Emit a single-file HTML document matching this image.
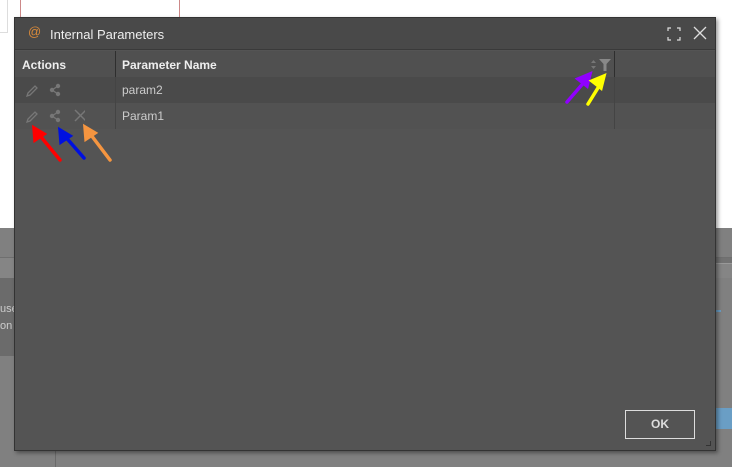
<!DOCTYPE html>
<html><head><meta charset="utf-8"><style>
*{margin:0;padding:0;box-sizing:border-box}
body{width:732px;height:467px;position:relative;overflow:hidden;background:#fff;font-family:"Liberation Sans",sans-serif}
.a{position:absolute}
</style></head><body>
<div class="a" style="left:0;top:0;width:8px;height:33px;border:1px solid #ddd;border-left:none;border-top:none;background:#fff"></div>
<div class="a" style="left:20px;top:0;width:1px;height:17px;background:#c88"></div>
<div class="a" style="left:179px;top:0;width:1px;height:17px;background:#c88"></div>
<div class="a" style="left:0;top:228px;width:732px;height:239px;background:#808080"></div>
<div class="a" style="left:0;top:257px;width:732px;height:1px;background:#6f6f6f"></div>
<div class="a" style="left:0;top:258px;width:732px;height:20px;background:#858585"></div>
<div class="a" style="left:0;top:278px;width:14px;height:78px;background:#6b6b6b"></div>
<div class="a" style="left:0;top:303px;font-size:11px;color:#ccc">use</div>
<div class="a" style="left:0;top:320px;font-size:11px;color:#ccc">on</div>
<div class="a" style="left:715px;top:258px;width:17px;height:6px;background:#727272"></div>
<div class="a" style="left:715px;top:263px;width:17px;height:1px;background:#999"></div>
<div class="a" style="left:715px;top:310px;width:6px;height:2px;background:#6a9ec5"></div>
<div class="a" style="left:715px;top:408px;width:17px;height:21px;background:#6a9ec5"></div>
<div class="a" style="left:55px;top:450px;width:1px;height:17px;background:#6a6a6a"></div>
<div class="a" style="left:14px;top:17px;width:702px;height:434px;background:#545454;border:1px solid #333;box-shadow:2px 2px 4px rgba(0,0,0,.4)">
 <div class="a" style="left:0;top:0;width:700px;height:32px;background:#494949;border-bottom:1px solid #3a3a3a"></div>
 <div class="a" style="left:13px;top:6px;font-size:13px;color:#d98a3a">@</div>
 <div class="a" style="left:35px;top:9px;font-size:13px;color:#eee">Internal Parameters</div>
 <svg class="a" style="left:652px;top:9px" width="14" height="14" viewBox="0 0 14 14" fill="none" stroke="#ddd" stroke-width="1.2"><path d="M1 4V1H4M10 1H13V4M13 10V13H10M4 13H1V10"/></svg>
 <svg class="a" style="left:678px;top:8px" width="14" height="14" viewBox="0 0 14 14" stroke="#ddd" stroke-width="1.3"><path d="M1 1L13 13M13 1L1 13"/></svg>
 <div class="a" style="left:0;top:33px;width:700px;height:26px;background:#505050"></div>
 <div class="a" style="left:100px;top:33px;width:1px;height:26px;background:#2e2e2e"></div>
 <div class="a" style="left:599px;top:33px;width:1px;height:26px;background:#2e2e2e"></div>
 <div class="a" style="left:7px;top:40px;font-size:12px;font-weight:bold;color:#eee">Actions</div>
 <div class="a" style="left:107px;top:40px;font-size:12px;font-weight:bold;color:#eee">Parameter Name</div>
 <svg class="a" style="left:575px;top:40px" width="24" height="14" viewBox="0 0 24 14"><path d="M1 5L3.5 2L6 5Z M1 8L3.5 11L6 8Z" fill="#777"/><path d="M9 1H21L16.5 6V13H13.5V6Z" fill="#888"/></svg>
 <div class="a" style="left:0;top:59px;width:700px;height:26px;background:#4a4a4a"></div>
 <div class="a" style="left:0;top:85px;width:700px;height:26px;background:#525252"></div>
 <div class="a" style="left:100px;top:59px;width:1px;height:52px;background:#444"></div>
 <div class="a" style="left:599px;top:59px;width:1px;height:52px;background:#444"></div>
 <div class="a" style="left:107px;top:65px;font-size:12px;color:#ccc">param2</div>
 <div class="a" style="left:107px;top:91px;font-size:12px;color:#ccc">Param1</div>
 <svg class="a" style="left:10px;top:65px" width="60" height="42" viewBox="0 0 60 42" fill="none" stroke="#777" stroke-width="1.3">
  <path d="M2 13L3 10L10 3L12 5L5 12Z"/>
  <path d="M2 39L3 36L10 29L12 31L5 38Z"/>
  <g fill="#777" stroke="none"><circle cx="33" cy="3" r="2.2"/><circle cx="27" cy="7" r="2.2"/><circle cx="33" cy="11" r="2.2"/>
  <circle cx="33" cy="29" r="2.2"/><circle cx="27" cy="33" r="2.2"/><circle cx="33" cy="37" r="2.2"/></g>
  <path d="M33 3L27 7L33 11M33 29L27 33L33 37"/>
  <path d="M51 27L62 38M62 27L51 38" transform="translate(-1,0)" stroke-width="1.5"/>
 </svg>
 <div class="a" style="left:610px;top:392px;width:70px;height:29px;border:1px solid #ddd;color:#ddd;font-size:12px;font-weight:bold;text-align:center;line-height:27px">OK</div>
 <div class="a" style="left:691px;top:423px;width:5px;height:5px;border-right:1px solid #333;border-bottom:1px solid #333"></div>
</div>
<svg class="a" style="left:0;top:0" width="732" height="467" stroke-linecap="round" stroke-width="3.5" fill="none">
 <g stroke="#f00"><path d="M60 160L37 132"/><path d="M34 128L35 140L44 134Z" fill="#f00"/></g>
 <g stroke="#0010e0"><path d="M84 158L63 134"/><path d="M60 130L61 142L70 136Z" fill="#0010e0"/></g>
 <g stroke="#f59540"><path d="M110 160L88 131"/><path d="M85 127L86 139L95 133Z" fill="#f59540"/></g>
 <g stroke="#9000ff"><path d="M567 102L586 80"/><path d="M590 74L578 79L587 86Z" fill="#9000ff"/></g>
 <g stroke="#ff0"><path d="M588 104L601 83"/><path d="M604 76L592 81L601 88Z" fill="#ff0"/></g>
</svg>
</body></html>
